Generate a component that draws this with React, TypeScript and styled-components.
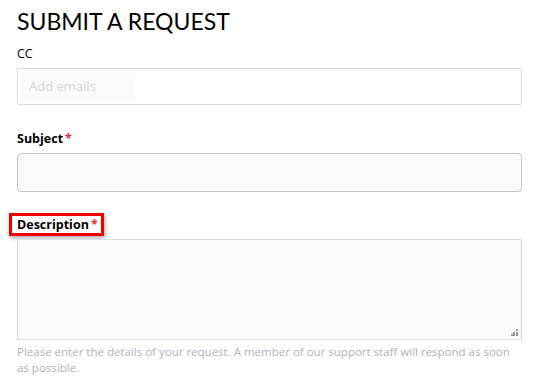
import styled, { createGlobalStyle } from "styled-components";

const Global = createGlobalStyle`
  body {
    margin: 0;
    background: #fff;
    font-family: "Open Sans", "Liberation Sans", sans-serif;
    color: #000;
  }
`;

export default function App() {
  return (
    <>
      <Global />
      <Page>
        <Title>SUBMIT A REQUEST</Title>
        <Field $gap={7}>
          <Label>CC</Label>
          <TagBox>
            <TagInput>Add emails</TagInput>
          </TagBox>
        </Field>
        <Field $gap={25}>
          <Label $bold>
            Subject<Star>*</Star>
          </Label>
          <TextInput />
        </Field>
        <Field $gap={21}>
          <Highlight>
            <Label $bold>
              Description<Star>*</Star>
            </Label>
          </Highlight>
          <TextArea>
            <Grip viewBox="0 0 7 7" width="7" height="7">
              <rect x="5" y="0" width="2" height="2" fill="#999" />
              <rect x="2" y="3" width="2" height="2" fill="#999" />
              <rect x="5" y="3" width="2" height="2" fill="#999" />
              <rect x="0" y="5" width="2" height="2" fill="#999" />
              <rect x="2" y="5" width="2" height="2" fill="#999" />
              <rect x="5" y="5" width="2" height="2" fill="#999" />
            </Grip>
          </TextArea>
          <Hint>
            Please enter the details of your request. A member of our support
            staff will respond as soon as possible.
          </Hint>
        </Field>
      </Page>
    </>
  );
}

//style
const Page = styled.div`
  width: 505px;
  padding: 5px 18px 0 17px;
`;

const Title = styled.h1`
  margin: 0;
  font-family: Lato, "Open Sans", sans-serif;
  font-size: 23px;
  font-weight: 400;
  line-height: 33px;
`;

const Field = styled.div<{ $gap?: number }>`
  display: flex;
  flex-direction: column;
  margin-top: ${(p) => p.$gap ?? 6}px;
`;

const Label = styled.div<{ $bold?: boolean }>`
  font-size: 12.5px;
  font-weight: ${(p) => (p.$bold ? 700 : 400)};
  line-height: 17px;
  color: #000;
  margin-bottom: 6px;
`;

const Star = styled.span`
  color: #e0303a;
  margin-left: 2px;
`;

const TagBox = styled.div`
  height: 37px;
  box-sizing: border-box;
  border: 1px solid #dcdcdc;
  border-radius: 2px;
  padding: 3px;
  display: flex;
`;

const TagInput = styled.div`
  width: 114px;
  background: #fafafa;
  border-radius: 3px;
  color: #d6d6d6;
  font-size: 13px;
  line-height: 29px;
  padding-left: 8px;
  box-sizing: border-box;
`;

const TextInput = styled.div`
  height: 39px;
  box-sizing: border-box;
  border: 1px solid #c6c6c6;
  border-radius: 4px;
  background: #fafafa;
`;

const Highlight = styled.div`
  align-self: flex-start;
  margin-left: -8px;
  padding: 0 3px 0 5px;
  border: 3px solid #ee0000;
  box-shadow: 1px 2px 4px rgba(0, 0, 0, 0.35);
  margin-bottom: 3px;

  & > div {
    margin-bottom: 0;
  }
`;

const TextArea = styled.div`
  position: relative;
  height: 101px;
  box-sizing: border-box;
  border: 1px solid #dcdcdc;
  background: #fafafa;
`;

const Grip = styled.svg`
  position: absolute;
  right: 3px;
  bottom: 3px;
`;

const Hint = styled.div`
  margin-top: 4px;
  font-size: 11.5px;
  line-height: 16px;
  color: #aab3bc;
`;
